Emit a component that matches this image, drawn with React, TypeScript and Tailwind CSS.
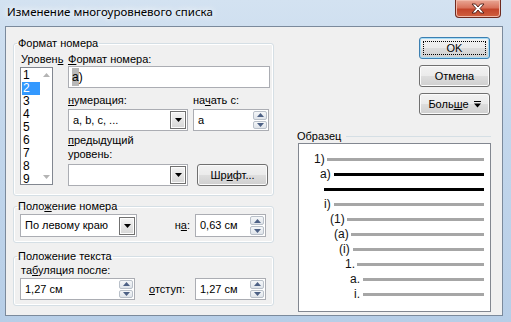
import React from "react";

function U({ children }: { children: React.ReactNode }) {
  return <span className="underline decoration-1 underline-offset-[1px]">{children}</span>;
}

function Tri({ up, color }: { up?: boolean; color: string }) {
  return (
    <svg width="7" height="4" viewBox="0 0 7 4">
      <path d={up ? "M0 4 L3.5 0 L7 4 Z" : "M0 0 L7 0 L3.5 4 Z"} fill={color} />
    </svg>
  );
}

function SpinArrows() {
  return (
    <div className="flex flex-col w-[15px] h-full py-[1px] pr-[1px] gap-[1px]">
      <div className="flex-1 border border-[#b9c0c9] rounded-[2px] bg-[linear-gradient(#f5f7f9,#dfe4ea)] flex items-center justify-center">
        <Tri up color="#4d6185" />
      </div>
      <div className="flex-1 border border-[#b9c0c9] rounded-[2px] bg-[linear-gradient(#f5f7f9,#dfe4ea)] flex items-center justify-center">
        <Tri color="#4d6185" />
      </div>
    </div>
  );
}

function Spin({ value, cls }: { value: string; cls: string }) {
  return (
    <div className={`border border-[#abadb3] bg-white flex items-center ${cls}`}>
      <span className="flex-1 pl-[4px] whitespace-nowrap">{value}</span>
      <SpinArrows />
    </div>
  );
}

function DropBtn() {
  return (
    <div className="w-[16px] h-[18px] mr-[1px] border border-[#707070] bg-[linear-gradient(#f4f4f4,#d6d6d6)] shadow-[inset_0_0_0_1px_#fcfcfc] flex items-center justify-center">
      <Tri color="#000" />
    </div>
  );
}

function Combo({ value, cls }: { value: string; cls: string }) {
  return (
    <div className={`border border-[#abadb3] bg-white flex items-center ${cls}`}>
      <span className="flex-1 pl-[4px] whitespace-nowrap">{value}</span>
      <DropBtn />
    </div>
  );
}

function Btn({ children, def }: { children: React.ReactNode; def?: boolean }) {
  return (
    <div
      className={`w-[71px] h-[22px] rounded-[3px] border ${
        def ? "border-[#3c7fb1] shadow-[inset_0_0_0_1px_#a6dcf7]" : "border-[#707070] shadow-[inset_0_0_0_1px_#fbfbfb]"
      } bg-[linear-gradient(#f2f2f2_0%,#ebebeb_48%,#dddddd_52%,#cfcfcf_100%)] flex items-center justify-center p-[3px]`}
    >
      <div
        className={`w-full h-full flex items-center justify-center ${
          def ? "border border-dotted border-black" : ""
        }`}
      >
        {children}
      </div>
    </div>
  );
}

const rows = [
  { t: "1)", pl: "pl-[15px]", w: "w-[13px]", c: "bg-[#a6a6a6]" },
  { t: "a)", pl: "pl-[21px]", w: "w-[14px]", c: "bg-black" },
  { t: "", pl: "pl-[25px]", w: "w-[0px]", c: "bg-black" },
  { t: "i)", pl: "pl-[25px]", w: "w-[10px]", c: "bg-[#a6a6a6]" },
  { t: "(1)", pl: "pl-[31px]", w: "w-[17px]", c: "bg-[#a6a6a6]" },
  { t: "(a)", pl: "pl-[35px]", w: "w-[17px]", c: "bg-[#a6a6a6]" },
  { t: "(i)", pl: "pl-[40px]", w: "w-[14px]", c: "bg-[#a6a6a6]" },
  { t: "1.", pl: "pl-[46px]", w: "w-[12px]", c: "bg-[#a6a6a6]" },
  { t: "a.", pl: "pl-[51px]", w: "w-[13px]", c: "bg-[#a6a6a6]" },
  { t: "i.", pl: "pl-[55px]", w: "w-[9px]", c: "bg-[#a6a6a6]" },
];

export default function App() {
  return (
    <div className="w-[511px] h-[322px] overflow-hidden bg-[linear-gradient(180deg,#d3e2f1_0%,#c3d7ec_40%,#b7cee7_100%)] font-['Liberation_Sans',Arial,sans-serif] text-[11px] text-black">
      {/* title bar */}
      <div className="h-[26px] flex items-start">
        <div className="pl-[7px] pt-[3px] text-[11.5px] leading-[18px] font-['Noto_Sans',sans-serif] [text-shadow:0_0_6px_#fff,0_0_10px_#fff] whitespace-nowrap">
          Изменение многоуровневого списка
        </div>
        <div className="ml-auto mr-[10px] w-[46px] h-[18px] rounded-b-[4px] border border-t-0 border-[#6e2a1f] bg-[linear-gradient(#e9a795_0%,#d9735c_45%,#c3452b_55%,#d0603f_100%)] shadow-[inset_0_0_0_1px_#f1b9a9] flex items-center justify-center">
          <svg width="14" height="11" viewBox="0 0 14 11">
            <path
              d="M1 1 H4.5 L7 4 L9.5 1 H13 L9 5.5 L13 10 H9.5 L7 7 L4.5 10 H1 L5 5.5 Z"
              fill="#fff"
              stroke="#4a1a12"
              strokeWidth="0.9"
              strokeLinejoin="round"
            />
          </svg>
        </div>
      </div>

      {/* client area */}
      <div className="ml-[5px] w-[498px] h-[290px] border border-[#7b8a9c] bg-[#f0f0f0] flex">
        {/* left column */}
        <div className="pl-[7px] flex flex-col">
          {/* Формат номера */}
          <fieldset className="mt-[10px] w-[261px] border border-[#d5dfe5] rounded-[3px] shadow-[inset_0_0_0_1px_#fff]">
            <legend className="ml-[3px] px-[1px] leading-[13px]">Формат номера</legend>
            <div className="flex pl-[6px] pt-[3px] pb-[9px]">
              <div className="w-[33px] flex flex-col">
                <div className="h-[14px] leading-[13px] pl-[1px] whitespace-nowrap">
                  Уровен<U>ь</U>
                </div>
                <div className="h-[118px] border border-[#828790] bg-white flex">
                  <div className="flex-1 flex flex-col pt-[1px] pl-[1px] text-[12px] leading-[13px]">
                    {["1", "2", "3", "4", "5", "6", "7", "8", "9"].map((n) => (
                      <div
                        key={n}
                        className={`h-[13px] pl-[1px] ${n === "2" ? "bg-[#3399ff] text-white" : ""}`}
                      >
                        {n}
                      </div>
                    ))}
                  </div>
                  <div className="w-[12px] flex flex-col justify-between items-center py-[5px]">
                    <Tri up color="#b4b4b4" />
                    <Tri color="#b4b4b4" />
                  </div>
                </div>
              </div>
              <div className="ml-[15px] w-[202px] flex flex-col">
                <div className="h-[13px] leading-[13px] whitespace-nowrap">
                  <U>Ф</U>ормат номера:
                </div>
                <div className="h-[22px] border border-[#abadb3] bg-white flex items-center pl-[3px] text-[12px]">
                  <span className="bg-[#b8b8b8]">a</span>
                  <span>)</span>
                </div>
                <div className="mt-[6px] flex">
                  <div className="w-[120px] flex flex-col">
                    <div className="h-[15px] leading-[13px]">
                      <U>н</U>умерация:
                    </div>
                    <Combo value="a, b, c, ..." cls="h-[22px]" />
                  </div>
                  <div className="ml-[5px] w-[76px] flex flex-col">
                    <div className="h-[15px] leading-[13px]">
                      на<U>ч</U>ать с:
                    </div>
                    <Spin value="a" cls="h-[22px]" />
                  </div>
                </div>
                <div className="mt-[2px] leading-[14px]">
                  <div>
                    <U>п</U>редыдущий
                  </div>
                  <div>уровень:</div>
                </div>
                <div className="mt-[3px] flex items-end">
                  <Combo value="" cls="h-[22px] w-[120px]" />
                  <div className="ml-[9px]">
                    <Btn>
                      Шр<U>и</U>фт...
                    </Btn>
                  </div>
                </div>
              </div>
            </div>
          </fieldset>

          {/* Положение номера */}
          <fieldset className="mt-[4px] w-[261px] border border-[#d5dfe5] rounded-[3px] shadow-[inset_0_0_0_1px_#fff]">
            <legend className="ml-[3px] px-[1px] leading-[13px]">
              Поло<U>ж</U>ение номера
            </legend>
            <div className="flex items-center pl-[6px] pr-[7px] pt-[1px] pb-[5px]">
              <Combo value="По левому краю" cls="h-[23px] w-[117px]" />
              <div className="ml-auto mr-[5px]">
                н<U>а</U>:
              </div>
              <Spin value="0,63 см" cls="h-[23px] w-[71px]" />
            </div>
          </fieldset>

          {/* Положение текста */}
          <fieldset className="mt-[7px] w-[261px] border border-[#d5dfe5] rounded-[3px] shadow-[inset_0_0_0_1px_#fff]">
            <legend className="ml-[3px] px-[1px] leading-[13px]">Положение текста</legend>
            <div className="flex flex-col pl-[6px] pr-[7px] pt-[1px] pb-[5px]">
              <div className="h-[14px] leading-[13px] pl-[1px]">
                та<U>б</U>уляция после:
              </div>
              <div className="flex items-center">
                <Spin value="1,27 см" cls="h-[22px] w-[115px]" />
                <div className="ml-auto mr-[10px]">
                  <U>о</U>тступ:
                </div>
                <Spin value="1,27 см" cls="h-[22px] w-[71px]" />
              </div>
            </div>
          </fieldset>
        </div>

        {/* right column */}
        <div className="flex-1 flex flex-col">
          <div className="pt-[10px] pr-[12px] flex flex-col items-end gap-[6px]">
            <Btn def>OK</Btn>
            <Btn>Отмена</Btn>
            <Btn>
              <span>
                Боль<U>ш</U>е
              </span>
              <svg className="ml-[5px]" width="7" height="7" viewBox="0 0 7 7">
                <rect x="0" y="0" width="7" height="1" fill="#000" />
                <path d="M0 2.5 H7 L3.5 6.5 Z" fill="#000" />
              </svg>
            </Btn>
          </div>
          <div className="mt-[15px] pl-[23px] pr-[11px] flex items-center h-[13px] leading-[13px]">
            <span>Образец</span>
            <div className="flex-1 ml-[5px] h-px bg-[#d5dfe5]" />
          </div>
          <div className="ml-[24px] mr-[11px] h-[169px] border border-[#828790] bg-white pt-[8px] pr-[6px] text-[12px] leading-[15px] text-[#111]">
            {rows.map((r, i) => (
              <div key={i} className={`h-[15px] flex items-center ${r.pl}`}>
                <span className={`${r.w} whitespace-nowrap`}>{r.t}</span>
                <div className={`flex-1 h-[3px] ${r.c}`} />
              </div>
            ))}
          </div>
        </div>
      </div>
    </div>
  );
}
